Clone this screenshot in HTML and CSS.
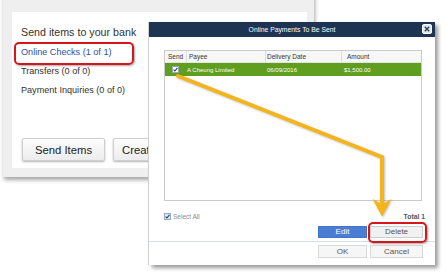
FILE: index.html
```html
<!DOCTYPE html>
<html>
<head>
<meta charset="utf-8">
<link rel="stylesheet" href="styles.css">
</head>
<body>
<div class="desk">
  <section class="win-back">
    <div class="panel">
      <p class="heading">Send items to your bank</p>
      <ul class="items">
        <li class="link">Online Checks (1 of 1)</li>
        <li>Transfers (0 of 0)</li>
        <li>Payment Inquiries (0 of 0)</li>
      </ul>
      <div class="btn-row">
        <button class="btn">Send Items</button>
        <button class="btn wide">Create New Message</button>
      </div>
    </div>
  </section>

  <section class="dialog">
    <header class="dlg-title">
      <span>Online Payments To Be Sent</span>
      <span class="close"><svg width="6" height="6" viewBox="0 0 6 6"><path d="M0.8 0.8 L5.2 5.2 M5.2 0.8 L0.8 5.2" stroke="#2a3b52" stroke-width="1.3"/></svg></span>
    </header>
    <div class="grid">
      <div class="grid-row grid-head">
        <span>Send</span><span>Payee</span><span>Delivery Date</span><span>Amount</span>
      </div>
      <div class="grid-row selected">
        <span><i class="cb"><svg width="5" height="5" viewBox="0 0 5 5"><path d="M0.6 2.6 L1.9 4 L4.4 0.8" fill="none" stroke="#1f3f7a" stroke-width="1.1"/></svg></i></span>
        <span>A Cheung Limited</span><span>06/09/2016</span><span>$1,500.00</span>
      </div>
    </div>
    <div class="dlg-foot">
      <span class="select-all"><i class="cb cb-light"><svg width="5" height="5" viewBox="0 0 5 5"><path d="M0.6 2.6 L1.9 4 L4.4 0.8" fill="none" stroke="#1f3f7a" stroke-width="1.1"/></svg></i>Select All</span>
      <span class="total">Total 1</span>
    </div>
    <div class="actions">
      <button class="dbtn primary">Edit</button>
      <button class="dbtn">Delete</button>
    </div>
    <div class="sep"></div>
    <div class="actions bottom">
      <button class="dbtn light">OK</button>
      <button class="dbtn light">Cancel</button>
    </div>
  </section>

  <div class="hl hl-checks"></div>
  <div class="hl hl-delete"></div>

  <svg class="arrow" width="446" height="277" viewBox="0 0 446 277">
    <polyline points="178,76 382,157 382,203" fill="none" stroke="#f4b41a" stroke-width="4" stroke-linecap="round"/>
    <path d="M372.5 199 L382 204 L391.5 199 L382 216.5 Z" fill="#f4b41a"/>
  </svg>
</div>
</body>
</html>
```

FILE: styles.css
```css
body {
  margin: 0;
  width: 446px;
  height: 277px;
  overflow: hidden;
  background: #fff;
  font-family: "Liberation Sans", Arial, sans-serif;
}

.desk {
  position: relative;
  width: 446px;
  height: 277px;
}

/* back window */
.win-back {
  position: absolute;
  left: 3px;
  top: -10px;
  width: 311px;
  height: 187px;
  box-sizing: border-box;
  padding: 22px 0 0 9px;
  background: #efefef;
  box-shadow: 1px 3px 4px rgba(0, 0, 0, 0.35);
}

.panel {
  width: 295px;
  height: 156px;
  box-sizing: border-box;
  padding: 11px 0 0 9px;
  background: #fff;
  display: flex;
  flex-direction: column;
}

.heading {
  margin: 0;
  font-size: 10.7px;
  line-height: 19px;
  color: #333;
}

.items {
  list-style: none;
  margin: 1px 0 0;
  padding: 0;
  font-size: 9.1px;
  line-height: 19px;
  color: #333;
}

.items .link {
  color: #2e4f9c;
}

.btn-row {
  display: flex;
  gap: 8px;
  margin: 38px 0 0 1px;
}

.btn {
  flex: none;
  width: 83px;
  height: 23px;
  padding: 0;
  font-family: "Liberation Sans", Arial, sans-serif;
  font-size: 11.3px;
  color: #222;
  background: linear-gradient(#fdfdfd, #ececec);
  border: 1px solid #cfcfcf;
  border-radius: 2px;
  box-shadow: 0 1px 2px rgba(0, 0, 0, 0.3);
  white-space: nowrap;
}

.btn.wide {
  width: auto;
  padding: 0 8px;
}

/* dialog */
.dialog {
  position: absolute;
  left: 149px;
  top: 22px;
  width: 286px;
  height: 243px;
  background: #fff;
  box-shadow: -1px 0 0 #cfcfcf, 3px 3px 4px rgba(0, 0, 0, 0.4);
  display: flex;
  flex-direction: column;
}

.dlg-title {
  position: relative;
  flex: none;
  height: 15px;
  background: #1d3452;
  color: #fff;
  font-size: 6.8px;
  display: flex;
  align-items: center;
  justify-content: center;
}

.close {
  position: absolute;
  right: 3px;
  top: 2px;
  width: 10px;
  height: 10px;
  box-sizing: border-box;
  background: #e2e8ef;
  border: 1px solid #fff;
  border-radius: 2px;
  display: flex;
  align-items: center;
  justify-content: center;
}

.grid {
  flex: none;
  margin: 13px 13px 0 15px;
  height: 151px;
  box-sizing: border-box;
  border: 1px solid #cacaca;
  font-size: 6px;
}

.grid-row {
  display: grid;
  grid-template-columns: 22px 79px 76px 1fr;
  height: 13px;
}

.grid-row > span {
  display: flex;
  align-items: center;
  white-space: nowrap;
}

.grid-head {
  height: 12px;
  background: #f7f7f7;
  color: #333;
  font-size: 6.5px;
}

.grid-head > span {
  border-right: 1px solid #dedede;
  border-bottom: 1px solid #e4e4e4;
  padding-left: 2px;
}

.grid-head > span:first-child {
  padding-left: 3px;
}

.grid-head > span:nth-child(3) {
  padding-left: 1px;
}

.grid-head > span:last-child {
  padding-left: 5px;
  border-right: 0;
}

.selected {
  background: #5f9e1f;
  color: #fff;
}

.selected > span:nth-child(2) {
  padding-left: 0;
}

.selected > span:nth-child(3) {
  padding-left: 1px;
}

.selected > span:nth-child(4) {
  padding-left: 2px;
}

.selected > span:first-child {
  padding-left: 7px;
}

.cb {
  display: inline-flex;
  align-items: center;
  justify-content: center;
  width: 7px;
  height: 7px;
  box-sizing: border-box;
  background: #fff;
  border: 1px solid #9aa7b8;
}

.cb-light {
  background: #dfe6ee;
  margin-right: 2px;
}

.dlg-foot {
  flex: none;
  margin: 11px 10px 0 15px;
  height: 8px;
  display: flex;
  justify-content: space-between;
  align-items: center;
  font-size: 6.5px;
  color: #8a8a8a;
}

.select-all {
  display: flex;
  align-items: center;
}

.total {
  font-weight: bold;
  font-size: 6.8px;
  color: #555;
}

.actions {
  flex: none;
  display: flex;
  justify-content: flex-end;
  gap: 3px;
  margin: 6px 12px 0 0;
}

.actions.bottom {
  margin-top: 3px;
}

.dbtn {
  width: 49px;
  height: 12px;
  padding: 0;
  font-family: "Liberation Sans", Arial, sans-serif;
  font-size: 8px;
  line-height: 10px;
  color: #555;
  background: #f1f1f1;
  border: 1px solid #cdcdcd;
}

.dbtn + .dbtn {
  width: 53px;
}

.dbtn.primary {
  background: #4a7dd3;
  border-color: #4373c6;
  color: #fff;
}

.dbtn.light {
  height: 13px;
  background: #f6f6f6;
  border-color: #dadada;
}

.sep {
  flex: none;
  height: 1px;
  margin-top: 3px;
  background: #d6e0e9;
}

/* annotations */
.hl {
  position: absolute;
  box-sizing: border-box;
  border: 2.5px solid #d6161d;
  border-radius: 5px;
  box-shadow: 1px 1px 2px rgba(0, 0, 0, 0.35);
}

.hl-checks {
  left: 14px;
  top: 42px;
  width: 120px;
  height: 23px;
}

.hl-delete {
  left: 368px;
  top: 222px;
  width: 59px;
  height: 21px;
}

.arrow {
  position: absolute;
  left: 0;
  top: 0;
  pointer-events: none;
  filter: drop-shadow(1px 1px 1px rgba(0, 0, 0, 0.25));
}
```
